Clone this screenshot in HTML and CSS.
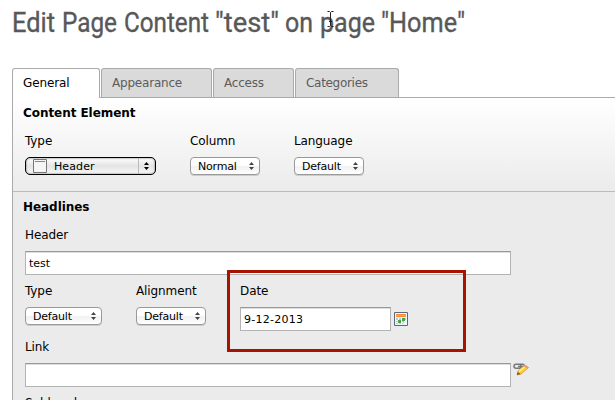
FILE: index.html
```html
<!DOCTYPE html>
<html lang="en">
<head>
<meta charset="utf-8">
<title>Edit Page Content</title>
<link rel="stylesheet" href="styles.css">
</head>
<body>
<svg class="defs" width="0" height="0"><symbol id="arrows" viewBox="0 0 5 8"><path d="M0 3L2.5 0L5 3ZM0 5H5L2.5 8Z"/></symbol></svg>
<h1 class="title"><svg width="480" height="44"><text y="32" lengthAdjust="spacingAndGlyphs"><tspan x="12" textLength="43" lengthAdjust="spacingAndGlyphs">Edit</tspan> <tspan x="62" textLength="55" lengthAdjust="spacingAndGlyphs">Page</tspan> <tspan x="124" textLength="85" lengthAdjust="spacingAndGlyphs">Content</tspan> <tspan x="215" textLength="64" lengthAdjust="spacingAndGlyphs">"test"</tspan> <tspan x="285" textLength="28" lengthAdjust="spacingAndGlyphs">on</tspan> <tspan x="320" textLength="55" lengthAdjust="spacingAndGlyphs">page</tspan> <tspan x="381" textLength="84" lengthAdjust="spacingAndGlyphs">"Home"</tspan></text></svg></h1>
<svg class="cursor" width="7" height="16" viewBox="0 0 7 16"><path d="M.5.5H2.5L3.5 1.5L4.5.5H6.5M3.5 1.5V14.5M.5 15.5H2.5L3.5 14.5L4.5 15.5H6.5M2 10.5H5"/></svg>
<nav class="tabs">
  <div class="tab active">General</div>
  <div class="tab appearance">Appearance</div>
  <div class="tab access">Access</div>
  <div class="tab categories">Categories</div>
</nav>
<main class="panel">
  <section class="content-element">
    <h2>Content Element</h2>
    <div class="row">
      <div class="field type"><label>Type</label>
        <div class="select focused"><svg class="page" width="14" height="14"><path d="M.5.5H13.5V13.5H.5Z" fill="#f5f5f5" stroke="#777"/><path d="M2 2.5H12" stroke="#888"/></svg><span>Header</span><i></i><svg class="arrows"><use href="#arrows"/></svg></div>
      </div>
      <div class="field column"><label>Column</label>
        <div class="select"><span>Normal</span><svg class="arrows"><use href="#arrows"/></svg></div>
      </div>
      <div class="field"><label>Language</label>
        <div class="select"><span>Default</span><svg class="arrows"><use href="#arrows"/></svg></div>
      </div>
    </div>
  </section>
  <section class="headlines">
    <h2>Headlines</h2>
    <div class="field"><label>Header</label><div class="input">test</div></div>
    <div class="row second">
      <div class="field kind"><label>Type</label>
        <div class="select wide"><span>Default</span><svg class="arrows"><use href="#arrows"/></svg></div>
      </div>
      <div class="field align"><label>Alignment</label>
        <div class="select"><span>Default</span><svg class="arrows"><use href="#arrows"/></svg></div>
      </div>
      <div class="field"><label>Date</label>
        <div class="with-icon"><div class="input date">9-12-2013</div>
          <svg class="calendar" width="14" height="14"><path d="M.5.5H13.5V13.5H.5Z" fill="#edf4fc" stroke="#5b6880"/><path d="M2 2H12V5H2Z" fill="#ff8b32"/><path d="M2 3.5H12" stroke="#ffa561"/><path d="M2 6H12V12H2Z" fill="#b1c8ef"/><path d="M2 8.5H12M2 10.5H9M4.5 6V12M7.5 6V12M10.5 6V10" stroke="#fff"/><path d="M8 6H11V9H8ZM4 8H7V11H4Z" fill="#4ba44b"/><path d="M9 12L12 9V12Z" fill="#fff"/></svg>
        </div>
      </div>
    </div>
    <div class="field link"><label>Link</label>
      <div class="with-icon"><div class="input"></div>
        <svg class="pencil" width="16" height="14"><g fill="none" stroke="#777" stroke-width="1.5"><rect x="1" y="1.2" width="7" height="4" rx="2"/><path d="M5 3.5H10M7 1.2H10Q12 2 11 4"/></g><path d="M4 12L5 8L12 2L15.5 4.5L8 11Z" fill="#ffd12e" stroke="#c88b2c" stroke-width=".7"/><path d="M6 8.5L12.5 3" stroke="#fff29a" stroke-width="1.3"/><path d="M12 2L15.5 4.5L14 5.7L10.8 3.2Z" fill="#e99b73"/><path d="M4 12L4.8 9L7.5 11Z" fill="#6e5235"/></svg>
      </div>
    </div>
    <div class="field sub"><label>Subheader</label></div>
  </section>
</main>
<div class="highlight"></div>
</body>
</html>
```
FILE: styles.css
```css
* { box-sizing: border-box; }
body { margin: 0; width: 615px; height: 400px; overflow: hidden; background: #fff; color: #000; font: 12px/16px "DejaVu Sans", sans-serif; }
.defs { position: absolute; }
.title { margin: 0; height: 68px; }
.title svg { display: block; }
.title text { font: 400 27.5px "Roboto", sans-serif; fill: #585858; stroke: #585858; stroke-width: .35px; }
.cursor { position: absolute; left: 327px; top: 11px; fill: none; stroke: #222; }
.tabs { display: flex; gap: 1px; height: 29px; margin-left: 12px; }
.tab { height: 29px; padding: 6px 10px; border: 1px solid #aaa; border-bottom: 0; border-radius: 3px 3px 0 0; background: #dadada; color: #5c5c5c; letter-spacing: -.2px; }
.tab.active { position: relative; width: 88px; height: 30px; background: #fff; color: #000; letter-spacing: -.1px; }
.tab.appearance { width: 111px; }
.tab.access { width: 81px; }
.tab.categories { width: 104px; letter-spacing: -.3px; }
.panel { margin-left: 12px; height: 303px; border: solid #aaa; border-width: 1px 0 0 1px; background: #ebebeb; overflow: hidden; }
h2 { margin: 0; padding-left: 10px; font: bold 12px/16px "DejaVu Sans", sans-serif; letter-spacing: -.06px; }
.content-element { height: 94px; padding-top: 7px; border-bottom: 1px solid #bbb; background: linear-gradient(#fff, #ebebeb); }
.row { display: flex; padding-left: 12px; }
.content-element .row { margin-top: 12px; }
.field label { display: block; height: 16px; letter-spacing: -.1px; }
.field.type { width: 165px; }
.field.column { width: 104px; }
.select { display: flex; align-items: center; width: 70px; height: 18px; margin-top: 8px; padding: 0 5px 0 7px; border: 1px solid #999; border-radius: 4px; background: linear-gradient(#fff 0 45%, #f1f1f1 55%, #fff); font-size: 11px; letter-spacing: -.2px; box-shadow: 0 1px 0 #ccc; }
.select span { flex: 1; padding-top: 1px; }
.select.wide { width: 77px; }
.arrows { width: 5px; height: 8px; fill: #444; }
.select.focused { width: 131px; border: 1px solid #000; border-radius: 5px; background: linear-gradient(#fff, #e4e4e4 50%, #f8f8f8); box-shadow: inset 0 0 2px #555; letter-spacing: .1px; padding-right: 6px; }
.focused .arrows { fill: #000; }
.focused i { width: 1px; height: 16px; background: #bbb; margin-right: 5px; }
.page { margin-right: 7px; }
.headlines { padding-top: 7px; }
.headlines > .field { margin-left: 12px; }
.headlines > .field:nth-of-type(1) { margin-top: 12px; }
.input { width: 486px; height: 24px; margin-top: 8px; padding: 4px 3px; border: 1px solid #b3b3b3; border-top-color: #999; background: #fff; font-size: 11px; line-height: 15px; box-shadow: inset 0 1px 0 #ddd; }
.second { height: 56px; margin-top: 8px; }
.field.kind { width: 111px; }
.field.align { width: 104px; }
.with-icon { display: flex; }
.input.date { width: 151px; letter-spacing: .25px; }
.calendar { margin: 13px 0 0 3px; }
.link .pencil { margin: 8px 0 0 2px; }
.sub { margin-top: 8px; }
.highlight { position: absolute; left: 227px; top: 270px; width: 239px; height: 82px; border: 3px solid #a61300; }
```
